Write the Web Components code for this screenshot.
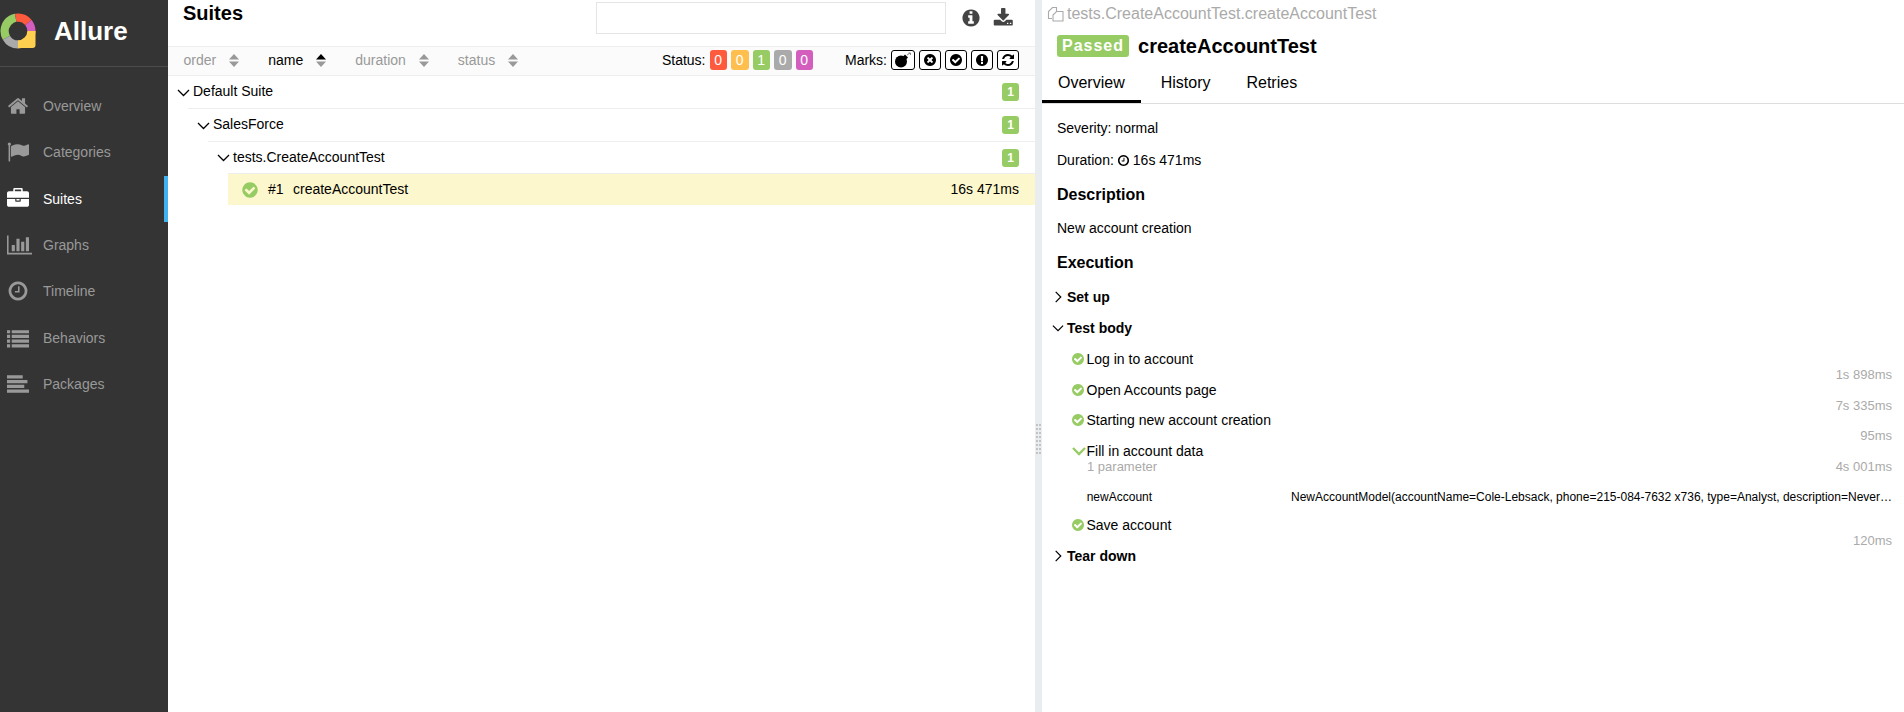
<!DOCTYPE html>
<html>
<head>
<meta charset="utf-8">
<title>Allure</title>
<style>
  html, body { margin: 0; height: 100%; overflow: hidden; background: #fff; }
  body { font: 14px "Liberation Sans", Arial, sans-serif; color: #000; }
</style>
</head>
<body>
<allure-app>
  <allure-sidebar slot="side">
    <nav-item icon="home">Overview</nav-item>
    <nav-item icon="flag">Categories</nav-item>
    <nav-item icon="briefcase" active>Suites</nav-item>
    <nav-item icon="chart">Graphs</nav-item>
    <nav-item icon="clock">Timeline</nav-item>
    <nav-item icon="list">Behaviors</nav-item>
    <nav-item icon="align">Packages</nav-item>
  </allure-sidebar>
  <suites-pane slot="left">
    <tree-row level="0" count="1">Default Suite</tree-row>
    <tree-row level="1" count="1">SalesForce</tree-row>
    <tree-row level="2" count="1">tests.CreateAccountTest</tree-row>
    <test-row order="#1" time="16s 471ms">createAccountTest</test-row>
  </suites-pane>
  <test-pane slot="right">
    <exec-block open="0">Set up</exec-block>
    <exec-block open="1" style="margin-bottom:7.500px">Test body</exec-block>
    <exec-step time="1s 898ms">Log in to account</exec-step>
    <exec-step time="7s 335ms">Open Accounts page</exec-step>
    <exec-step time="95ms">Starting new account creation</exec-step>
    <exec-step time="4s 001ms" expanded>Fill in account data</exec-step>
    <exec-param name="newAccount">NewAccountModel(accountName=Cole-Lebsack, phone=215-084-7632 x736, type=Analyst, description=Never…</exec-param>
    <exec-step time="120ms" style="height:24px">Save account</exec-step>
    <exec-block open="0">Tear down</exec-block>
  </test-pane>
</allure-app>

<script>
// font awesome style glyphs, 1792 box unless the entry says otherwise
const ICONS = {
  home: 'M1472 992v480q0 26-19 45t-45 19h-384v-384h-256v384h-384q-26 0-45-19t-19-45v-480q0-1 .5-3t.5-3l575-474 575 474q1 2 1 6zm223-69l-62 74q-8 9-21 11h-3q-13 0-21-7l-692-577-692 577q-12 8-24 7-13-2-21-11l-62-74q-8-10-7-23.500t11-21.500l719-599q32-26 76-26t76 26l244 204v-195q0-14 9-23t23-9h192q14 0 23 9t9 23v408l219 182q10 8 11 21.500t-7 23.500z',
  flag: 'M320 256q0 72-64 110v1266q0 13-9.500 22.500t-22.500 9.500h-64q-13 0-22.500-9.500t-9.500-22.500v-1266q-64-38-64-110 0-53 37.500-90.500t90.500-37.500 90.500 37.500 37.500 90.500zm1472 64v763q0 25-12.500 38.500t-39.500 27.500q-215 116-369 116-61 0-123.500-22t-108.500-48-115.500-48-142.500-22q-192 0-464 146-17 9-33 9-26 0-45-19t-19-45v-742q0-32 31-55 21-14 79-43 236-120 421-120 107 0 200 29t219 88q38 19 88 19 54 0 117.500-21t110-47 88-47 54.500-21q26 0 45 19t19 45z',
  briefcase: 'M640 256h512v-128h-512v128zm1152 640v480q0 66-47 113t-113 47h-1472q-66 0-113-47t-47-113v-480h672v160q0 26 19 45t45 19h320q26 0 45-19t19-45v-160h672zm-768 0v128h-256v-128h256zm768-480v384h-1792v-384q0-66 47-113t113-47h352v-160q0-40 28-68t68-28h576q40 0 68 28t28 68v160h352q66 0 113 47t47 113z',
  chart: 'M640 896v512h-256v-512h256zm384-512v1024h-256v-1024h256zm1024 1152v128h-2048v-1536h128v1408h1920zm-640-896v768h-256v-768h256zm384-384v1152h-256v-1152h256z',
  clock: 'M1024 544v448q0 14-9 23t-23 9h-320q-14 0-23-9t-9-23v-64q0-14 9-23t23-9h224v-352q0-14 9-23t23-9h64q14 0 23 9t9 23zm416 352q0-148-73-273t-198-198-273-73-273 73-198 198-73 273 73 273 198 198 273 73 273-73 198-198 73-273zm224 0q0 209-103 385.500t-279.500 279.500-385.500 103-385.500-103-279.500-279.500-103-385.500 103-385.500 279.500-279.500 385.500-103 385.500 103 279.500 279.500 103 385.500z',
  list: 'M0 256h256v256h-256zM384 256h1408v256h-1408zM0 640h256v256h-256zM384 640h1408v256h-1408zM0 1024h256v256h-256zM384 1024h1408v256h-1408zM0 1408h256v256h-256zM384 1408h1408v256h-1408z',
  align: 'M0 192h1280v256h-1280zM0 576h1664v256h-1664zM0 960h1408v256h-1408zM0 1344h1792v256h-1792z',
  info: 'M1152 1376v-160q0-14-9-23t-23-9h-96v-512q0-14-9-23t-23-9h-320q-14 0-23 9t-9 23v160q0 14 9 23t23 9h96v320h-96q-14 0-23 9t-9 23v160q0 14 9 23t23 9h448q14 0 23-9t9-23zm-128-896v-160q0-14-9-23t-23-9h-192q-14 0-23 9t-9 23v160q0 14 9 23t23 9h192q14 0 23-9t9-23zm640 416q0 209-103 385.500t-279.500 279.500-385.500 103-385.500-103-279.500-279.500-103-385.500 103-385.500 279.500-279.500 385.500-103 385.500 103 279.500 279.500 103 385.500z',
  download: 'M1344 1344q0-26-19-45t-45-19-45 19-19 45 19 45 45 19 45-19 19-45zm256 0q0-26-19-45t-45-19-45 19-19 45 19 45 45 19 45-19 19-45zm128-224v320q0 40-28 68t-68 28h-1472q-40 0-68-28t-28-68v-320q0-40 28-68t68-28h465l135 136q58 56 136 56t136-56l136-136h464q40 0 68 28t28 68zm-325-569q17 41-14 70l-448 448q-18 19-45 19t-45-19l-448-448q-31-29-14-70 17-39 59-39h256v-448q0-26 19-45t45-19h256q26 0 45 19t19 45v448h256q42 0 59 39z',
  check: 'M1412 734q0-28-18-46l-91-90q-19-19-45-19t-45 19l-408 407-226-226q-19-19-45-19t-45 19l-91 90q-18 18-18 46 0 27 18 45l362 362q19 19 45 19 27 0 46-19l543-543q18-18 18-45zm252 162q0 209-103 385.500t-279.500 279.500-385.500 103-385.500-103-279.500-279.500-103-385.500 103-385.500 279.500-279.500 385.500-103 385.500 103 279.500 279.500 103 385.500z',
  times: 'M1277 1122q0-26-19-45l-181-181 181-181q19-19 19-45 0-27-19-46l-90-90q-19-19-46-19-26 0-45 19l-181 181-181-181q-19-19-45-19-27 0-46 19l-90 90q-19 19-19 46 0 26 19 45l181 181-181 181q-19 19-19 45 0 27 19 46l90 90q19 19 46 19 26 0 45-19l181-181 181 181q19 19 45 19 27 0 46-19l90-90q19-19 19-46zm387-226q0 209-103 385.500t-279.500 279.500-385.500 103-385.500-103-279.500-279.500-103-385.500 103-385.500 279.500-279.500 385.500-103 385.500 103 279.500 279.500 103 385.500z',
  excl: 'M896 128q209 0 385.500 103t279.500 279.500 103 385.500-103 385.500-279.500 279.500-385.500 103-385.500-103-279.500-279.500-103-385.500 103-385.500 279.500-279.500 385.500-103zm128 1247v-190q0-14-9-23.500t-22-9.500h-192q-13 0-23 10t-10 23v190q0 13 10 23t23 10h192q13 0 22-9.500t9-23.500zm-2-344l18-621q0-12-10-18-10-8-24-8h-220q-14 0-24 8-10 6-10 18l17 621q0 10 10 17.500t24 7.500h185q14 0 23.500-7.500t10.500-17.500z',
  refresh: 'M1639 1056q0 5-1 7-64 268-268 434.500t-478 166.500q-146 0-282.500-55t-243.500-157l-129 129q-19 19-45 19t-45-19-19-45v-448q0-26 19-45t45-19h448q26 0 45 19t19 45-19 45l-137 137q71 66 161 102t187 36q134 0 250-65t186-179q11-17 53-117 8-23 30-23h192q13 0 22.500 9.500t9.500 22.500zm25-800v448q0 26-19 45t-45 19h-448q-26 0-45-19t-19-45 19-45l138-138q-148-137-349-137-134 0-250 65t-186 179q-11 17-53 117-8 23-30 23h-199q-13 0-22.500-9.500t-9.500-22.500v-7q65-268 270-434.500t480-166.500q146 0 284 55.500t245 156.500l130-129q19-19 45-19t45 19 19 45z'
};
const BOXES = { chart: '0 0 2048 1792' };

function icon(name, size, color) {
  const box = BOXES[name] || '0 0 1792 1792';
  const w = BOXES[name] ? size * 2048 / 1792 : size;
  return `<svg width="${w}" height="${size}" viewBox="${box}" style="display:block;flex:none"><path fill="${color}" d="${ICONS[name]}"/></svg>`;
}

// bomb has a thin grey fuse in the reference, so it gets its own drawing
const BOMB = `<svg width="18" height="16" viewBox="0 0 18 16" style="display:block;flex:none">
  <circle cx="7" cy="9.500" r="6" fill="#000"/>
  <path fill="#000" d="M9 4.500l2-2 3 3-2 2z"/>
  <path fill="none" stroke="#888" stroke-width="1" d="M13 3l3-2M14.500 1h2v2"/>
</svg>`;

function chevron(open, size, width) {
  const d = open ? 'M1 4l5.500 5.500L12 4' : 'M4 1l5.500 5.500L4 12';
  return `<svg width="${size}" height="${size}" viewBox="0 0 13 13" style="display:block;flex:none"><path fill="none" stroke="#000" stroke-width="${width || 1.3}" d="${d}"/></svg>`;
}

function sortIcon(active) {
  const top = active ? '#000' : '#999';
  return `<svg width="10" height="13" viewBox="0 0 10 13" style="display:block;flex:none"><path fill="${top}" d="M5 0l5 5.500H0z"/><path fill="#999" d="M5 13L0 7.500h10z"/></svg>`;
}

class AllureApp extends HTMLElement {
  connectedCallback() {
    this.attachShadow({ mode: 'open' });
    this.shadowRoot.innerHTML = `
      <style>
        :host { display: flex; height: 712px; }
        .side { flex: 0 0 168px; display: block; }
        .left { flex: 0 0 867px; min-width: 0; }
        .gutter { flex: 0 0 7px; background: #e9edf0; padding-top: 424px; box-sizing: border-box; }
        .gutter svg { display: block; margin-left: 1px; }
        .right { flex: 1; min-width: 0; }
      </style>
      <div class="side"><slot name="side"></slot></div>
      <div class="left"><slot name="left"></slot></div>
      <div class="gutter">
        <svg width="6" height="31" viewBox="0 0 6 31">
          <defs><pattern id="dots" width="3" height="4" patternUnits="userSpaceOnUse"><rect width="2" height="2" fill="#c4c4c4"/></pattern></defs>
          <rect width="6" height="31" fill="url(#dots)"/>
        </svg>
      </div>
      <div class="right"><slot name="right"></slot></div>
    `;
  }
}

class AllureSidebar extends HTMLElement {
  connectedCallback() {
    // ring segments: colour, start angle, sweep (clockwise from the top)
    const arcs = [['#97cc64', 240, 110], ['#aaa', 180, 60], ['#ffd050', 90, 90], ['#d35ebe', 50, 40], ['#fd5a3e', -10, 60]];
    const arcHtml = arcs.map(a => `<circle r="13.400" pathLength="360" stroke="${a[0]}" stroke-dasharray="${a[2]} 360" transform="rotate(${a[1] - 90})"/>`).join('');
    this.attachShadow({ mode: 'open' });
    this.shadowRoot.innerHTML = `
      <style>
        :host { display: block; height: 712px; background: #343434; }
        .brand { height: 66px; border-bottom: 1px solid #4c4c4c; display: flex; align-items: center; }
        .brand svg { display: block; margin-top: 13px; align-self: flex-start; flex: none; }
        .name { color: #fff; font-weight: bold; font-size: 26px; margin-left: 17px; margin-top: -4px; }
        .items { padding-top: 16px; }
      </style>
      <div class="brand">
        <svg width="37" height="36" viewBox="0 0 37 36">
          <g fill="none" stroke-width="8.200" transform="translate(18 18)">${arcHtml}</g>
          <path fill="#ffd050" d="M29 18h6.500v14q0 3-3 3H18v-6A11 11 0 0 0 29 18z"/>
        </svg>
        <span class="name">Allure</span>
      </div>
      <div class="items"><slot></slot></div>
    `;
  }
}

class NavItem extends HTMLElement {
  connectedCallback() {
    const active = this.hasAttribute('active');
    const color = active ? '#fff' : '#999';
    this.attachShadow({ mode: 'open' });
    this.shadowRoot.innerHTML = `
      <style>
        :host { display: block; height: 46.300px; }
        .row { display: flex; align-items: center; height: 100%; color: ${color}; box-sizing: border-box; ${active ? 'border-right: 4px solid #42b1f0;' : ''} }
        .ic { width: 43px; padding-left: 7px; box-sizing: border-box; flex: none; }
      </style>
      <div class="row"><div class="ic">${icon(this.getAttribute('icon'), 22, color)}</div><slot></slot></div>
    `;
  }
}

class SuitesPane extends HTMLElement {
  connectedCallback() {
    this.attachShadow({ mode: 'open' });
    const sorts = [['order', 0], ['name', 1], ['duration', 0], ['status', 0]];
    const sortHtml = sorts.map(s => `<span class="sort${s[1] ? ' on' : ''}">${s[0]}${sortIcon(s[1])}</span>`).join('');
    const badges = [['0', '#fd5a3e'], ['0', '#ffbf4e'], ['1', '#97cc64'], ['0', '#aaa'], ['0', '#d35ebe']];
    const badgeHtml = badges.map(b => `<span class="badge" style="background:${b[1]}">${b[0]}</span>`).join('');
    const marks = ['bomb', 'times', 'check', 'excl', 'refresh'];
    const markHtml = marks.map(m => `<span class="mark${m == 'bomb' ? ' wide' : ''}">${m == 'bomb' ? BOMB : icon(m, 14, '#000')}</span>`).join('');
    this.shadowRoot.innerHTML = `
      <style>
        :host { display: block; height: 712px; background: #fff; }
        .head { height: 46px; display: flex; align-items: flex-start; }
        h2 { margin: 0 0 0 15px; font-size: 20px; line-height: 26px; flex: 1; }
        .search { width: 350px; height: 32px; margin-top: 2px; border: 1px solid #e5e5e5; box-sizing: border-box; }
        .tools { display: flex; align-items: center; gap: 12px; height: 36px; margin: 0 21.500px 0 15px; }
        .bar { height: 30px; box-sizing: border-box; background: #fbfbfb; border-top: 1px solid #eee; border-bottom: 1px solid #eee;
               display: flex; align-items: center; padding: 0 16px 2px 15.500px; }
        .sorts { display: flex; gap: 29px; flex: 1; color: #999; }
        .sort { display: inline-flex; align-items: center; gap: 13px; }
        .sort.on { color: #000; }
        .badges { display: flex; gap: 4px; margin-right: 32px; align-items: center; }
        .badge { width: 17.500px; height: 20px; line-height: 20px; text-align: center; color: #fff; border-radius: 3px; }
        .marks { display: flex; gap: 4px; align-items: center; }
        .mark { width: 22px; height: 20px; box-sizing: border-box; border: 1px solid #000; border-radius: 3px; background: #fff; display: flex; align-items: center; justify-content: center; }
        .mark.wide { width: 24px; }
      </style>
      <div class="head">
        <h2>Suites</h2>
        <div class="search"></div>
        <div class="tools">${icon('info', 20, '#444')}${icon('download', 20.5, '#444')}</div>
      </div>
      <div class="bar">
        <div class="sorts">${sortHtml}</div>
        <div class="badges"><span>Status:</span>${badgeHtml}</div>
        <div class="marks"><span>Marks:</span>${markHtml}</div>
      </div>
      <slot></slot>
    `;
  }
}

class TreeRow extends HTMLElement {
  connectedCallback() {
    const level = +this.getAttribute('level');
    this.attachShadow({ mode: 'open' });
    this.shadowRoot.innerHTML = `
      <style>
        :host { display: block; margin-left: ${level * 20}px; }
        .row { height: ${level == 1 ? 33 : 32}px; box-sizing: border-box; ${level ? 'border-top: 1px solid #eee;' : ''} display: flex; align-items: center; padding: 0 16px 0 9px; }
        .txt { flex: 1; margin: -2px 0 0 3px; }
        .count { width: 17px; height: 18px; line-height: 18px; border-radius: 3px; background: #97cc64; color: #fff; font-size: 12px; font-weight: bold; text-align: center; }
      </style>
      <div class="row">${chevron(true, 13)}<span class="txt"><slot></slot></span><span class="count">${this.getAttribute('count')}</span></div>
    `;
  }
}

class TestRow extends HTMLElement {
  connectedCallback() {
    this.attachShadow({ mode: 'open' });
    this.shadowRoot.innerHTML = `
      <style>
        :host { display: block; margin-left: 60px; }
        .row { height: 32px; background: #fdf7cd; border-top: 1px solid #eee; box-sizing: border-box; display: flex; align-items: center; padding: 0 16px 0 13px; }
        .order { margin: -2px 0 0 9px; width: 25px; }
        .txt { flex: 1; margin-top: -2px; }
        .time { margin-top: -2px; }
      </style>
      <div class="row">${icon('check', 18, '#97cc64')}<span class="order">${this.getAttribute('order')}</span><span class="txt"><slot></slot></span><span class="time">${this.getAttribute('time')}</span></div>
    `;
  }
}

class TestPane extends HTMLElement {
  connectedCallback() {
    this.attachShadow({ mode: 'open' });
    this.shadowRoot.innerHTML = `
      <style>
        :host { display: block; height: 712px; background: #fff; }
        .path { display: flex; align-items: center; gap: 3px; height: 27px; padding-left: 5px; color: #aaa; font-size: 16px; }
        .title { display: flex; align-items: center; height: 32px; padding-left: 15px; margin-top: 3px; }
        .status { background: #97cc64; color: #fff; font-weight: bold; font-size: 16px; letter-spacing: 1px; border-radius: 3px; height: 22px; line-height: 22px; padding: 0 5px; }
        h1 { margin: 0 0 0 9px; font-size: 20px; }
        .tabs { display: flex; height: 41px; border-bottom: 1px solid #ddd; font-size: 16px; }
        .tab { height: 41px; line-height: 42px; padding: 0 16px; margin-right: 4px; box-sizing: border-box; }
        .tab.on { border-bottom: 3px solid #000; }
        .body { padding: 0 15px; }
        .line { height: 32px; line-height: 32px; }
        h3 { margin: 0; font-size: 16px; height: 36px; line-height: 38px; }
        .exec { margin: 1.500px -3px 0 -5px; }
      </style>
      <div class="path">
        <svg width="17" height="16" viewBox="0 0 17 16" style="flex:none"><g fill="none" stroke="#aaa" stroke-width="1.100"><path d="M5 12.500H1.500V5.500L5.500 1.500H9.500V5"/><path d="M9.500 5.500h6.500v9.500H6V9z"/></g></svg>
        <span>tests.CreateAccountTest.createAccountTest</span>
      </div>
      <div class="title"><span class="status">Passed</span><h1>createAccountTest</h1></div>
      <div class="tabs"><span class="tab on">Overview</span><span class="tab">History</span><span class="tab">Retries</span></div>
      <div class="body">
        <div class="line" style="margin-top:8px">Severity: normal</div>
        <div class="line" style="display:flex;align-items:center;gap:3px">Duration: ${icon('clock', 13, '#000')} 16s 471ms</div>
        <h3>Description</h3>
        <div class="line">New account creation</div>
        <h3>Execution</h3>
        <div class="exec"><slot></slot></div>
      </div>
    `;
  }
}

class ExecBlock extends HTMLElement {
  connectedCallback() {
    this.attachShadow({ mode: 'open' });
    this.shadowRoot.innerHTML = `
      <style>
        :host { display: block; }
        .row { height: 31px; display: flex; align-items: center; gap: 3px; font-weight: bold; font-size: 14px; }
      </style>
      <div class="row">${chevron(this.getAttribute('open') == '1', 12)}<slot></slot></div>
    `;
  }
}

class ExecStep extends HTMLElement {
  connectedCallback() {
    const expanded = this.hasAttribute('expanded');
    const mark = expanded
      ? '<svg width="14" height="14" viewBox="0 0 14 14" style="display:block;flex:none;overflow:visible"><path fill="none" stroke="#97cc64" stroke-width="2.400" d="M2 4l6 6 6-6"/></svg>'
      : icon('check', 14, '#97cc64');
    this.attachShadow({ mode: 'open' });
    this.shadowRoot.innerHTML = `
      <style>
        :host { display: block; height: 30.700px; padding-left: 18.500px; }
        .name { display: flex; align-items: center; gap: 2px; height: 16px; }
        .time { text-align: right; color: #aaa; font-size: 13px; height: 15px; line-height: 15px; }
        .sub { color: #aaa; font-size: 13px; height: 15px; line-height: 15px; padding-left: 16.500px; margin-bottom: -15px; }
      </style>
      <div class="name">${mark}<slot></slot></div>
      ${expanded ? '<div class="sub">1 parameter</div>' : ''}
      <div class="time">${this.getAttribute('time')}</div>
    `;
  }
}

class ExecParam extends HTMLElement {
  connectedCallback() {
    this.attachShadow({ mode: 'open' });
    this.shadowRoot.innerHTML = `
      <style>
        :host { display: flex; justify-content: space-between; height: 30px; align-items: center; margin: 8px 0 5px; padding-left: 34.700px; font-size: 12px; white-space: nowrap; }
      </style>
      <span>${this.getAttribute('name')}</span><span><slot></slot></span>
    `;
  }
}

customElements.define('allure-app', AllureApp);
customElements.define('allure-sidebar', AllureSidebar);
customElements.define('nav-item', NavItem);
customElements.define('suites-pane', SuitesPane);
customElements.define('tree-row', TreeRow);
customElements.define('test-row', TestRow);
customElements.define('test-pane', TestPane);
customElements.define('exec-block', ExecBlock);
customElements.define('exec-step', ExecStep);
customElements.define('exec-param', ExecParam);
</script>
</body>
</html>
